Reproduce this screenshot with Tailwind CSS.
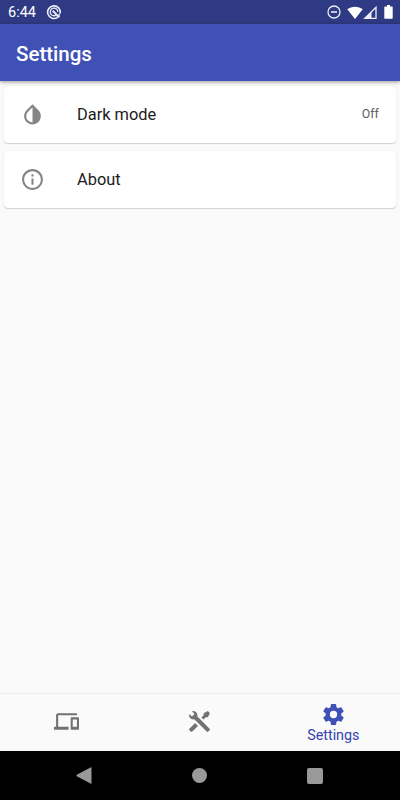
<!DOCTYPE html>
<html lang="en">
<head>
    <meta charset="UTF-8">
    <meta name="viewport" content="width=device-width, initial-scale=1.0">
    <title>Settings</title>
    <script src="https://cdn.jsdelivr.net/npm/@tailwindcss/browser@4"></script>
    <style>
        body {
            font-family: Roboto, sans-serif;
        }
    </style>
</head>
<body class="bg-[#fafafa] h-screen flex flex-col overflow-hidden">

    <!-- Status bar -->
    <div class="h-6 shrink-0 bg-[#2e3b84] text-white flex items-center pl-2 pr-[7px]">
        <span class="text-[14.5px] leading-6 pt-[2px] w-[38px]">6:44</span>
        <svg class="w-4 h-4" viewBox="0 0 16 16" fill="none" stroke="#eceef7">
            <path d="M11.6 13.3A6.3 6.3 0 1 1 14.1 9.5" stroke-width="1.6"/>
            <path d="M9.8 11.3A3.8 3.8 0 1 1 11.8 8" stroke-width="1.3"/>
            <path d="M6.6 6.6L13 13.2" stroke-width="2"/>
            <path d="M13.2 9.5v3.7" stroke-width="1.2"/>
        </svg>
        <div class="ml-auto flex items-center">
            <svg class="w-[14px] h-[14px] mr-[6px]" viewBox="0 0 14 14" fill="none" stroke="#eceef7" stroke-width="1.3">
                <circle cx="7" cy="7" r="6"/>
                <path d="M4 7h6" stroke-width="1.6"/>
            </svg>
            <svg class="w-4 h-[13px]" viewBox="0 0 16 13" fill="white">
                <path d="M8 13L0.3 3.2C4.5-.2 11.5-.2 15.7 3.2z"/>
            </svg>
            <svg class="w-[14px] h-[13px] mr-[7px]" viewBox="0 0 14 13">
                <path d="M13 1.3v11H1.8z" fill="none" stroke="#eceef7" stroke-width="1.3"/>
                <path d="M8.5 5.8V12.3H1.8z" fill="#eceef7"/>
            </svg>
            <svg class="w-[9px] h-[14px]" viewBox="0 0 9 14" fill="white">
                <path d="M3 0h3v1.4h2q.7 0 .7.7v10.8q0 .8-.7.8H1q-.7 0-.7-.8V2.1q0-.7.7-.7h2z"/>
            </svg>
        </div>
    </div>

    <!-- App bar -->
    <header class="h-[57px] shrink-0 bg-[#3f51b5] flex items-center px-4 shadow-[0_1px_4px_rgba(0,0,0,0.4)]">
        <h1 class="text-white text-[20.5px] font-medium pt-[3px]">Settings</h1>
    </header>

    <!-- Settings list -->
    <main class="flex-1 px-1 pt-[5px] flex flex-col gap-2">
        <div class="h-[57px] bg-white rounded-[4px] shadow-[0_1px_1px_rgba(0,0,0,0.16),0_0_1px_rgba(0,0,0,0.14)] flex items-center pl-4 pr-[17px]">
            <svg class="w-[25px] h-[25px] text-[#858585]" viewBox="0 0 24 24" fill="currentColor">
                <path d="M17.66 7.93L12 2.27 6.34 7.93c-3.12 3.12-3.12 8.19 0 11.31C7.9 20.8 9.95 21.58 12 21.58c2.05 0 4.1-.78 5.66-2.34 3.12-3.12 3.12-8.19 0-11.31zM12 19.59c-1.6 0-3.11-.62-4.24-1.76C6.62 16.69 6 15.19 6 13.59s.62-3.11 1.76-4.24L12 5.1v14.49z"/>
            </svg>
            <span class="ml-8 pt-[2px] text-[16.4px] text-[#1c1c1c]">Dark mode</span>
            <span class="ml-auto text-[12.3px] text-[#606060] tracking-[0.1px]">Off</span>
        </div>
        <div class="h-[57px] bg-white rounded-[4px] shadow-[0_1px_1px_rgba(0,0,0,0.16),0_0_1px_rgba(0,0,0,0.14)] flex items-center pl-4 pr-[17px]">
            <svg class="w-[25px] h-[25px] text-[#858585]" viewBox="0 0 24 24" fill="currentColor">
                <path d="M11 7h2v2h-2zm0 4h2v6h-2zm1-9C6.48 2 2 6.48 2 12s4.48 10 10 10 10-4.48 10-10S17.52 2 12 2zm0 18c-4.41 0-8-3.59-8-8s3.59-8 8-8 8 3.59 8 8-3.59 8-8 8z"/>
            </svg>
            <span class="ml-8 pt-[2px] text-[16.4px] text-[#1c1c1c]">About</span>
        </div>
    </main>

    <!-- Bottom navigation -->
    <nav class="h-[57px] shrink-0 grid grid-cols-3 shadow-[0_-1px_1px_rgba(0,0,0,0.05)]">
        <div class="flex items-center justify-center pb-[2px]">
            <svg class="w-[25px] h-[25px] text-[#727272]" viewBox="0 0 24 24" fill="currentColor">
                <path d="M4 6h18V4H4c-1.1 0-2 .9-2 2v11H0v3h14v-3H4V6zm19 2h-6c-.55 0-1 .45-1 1v10c0 .55.45 1 1 1h6c.55 0 1-.45 1-1V9c0-.55-.45-1-1-1zm-1 9h-4v-7h4v7z"/>
            </svg>
        </div>
        <div class="flex items-center justify-center pb-[2px]">
            <svg class="w-[25px] h-[25px] text-[#727272]" viewBox="0 0 24 24" fill="currentColor">
                <path d="M21.71 20.29L20.29 21.71A1 1 0 0 1 18.88 21.71L7 9.85A3.81 3.81 0 0 1 6 10A4 4 0 0 1 2.22 4.7L4.76 7.24L5.29 6.71L6.71 5.29L7.24 4.76L4.7 2.22A4 4 0 0 1 10 6A3.81 3.81 0 0 1 9.85 7L21.71 18.88A1 1 0 0 1 21.71 20.29M2.29 18.88A1 1 0 0 0 2.29 20.29L3.71 21.71A1 1 0 0 0 5.12 21.71L10.59 16.25L7.76 13.42M20 2L16 4V6L13.83 8.17L15.83 10.17L18 8H20L22 4Z"/>
            </svg>
        </div>
        <div class="flex flex-col items-center pt-2 text-[#3f51b5]">
            <svg class="w-[25px] h-[25px]" viewBox="0 0 24 24" fill="currentColor">
                <path d="M12 15.5A3.5 3.5 0 0 1 8.5 12 3.5 3.5 0 0 1 12 8.5a3.5 3.5 0 0 1 3.5 3.5 3.5 3.5 0 0 1-3.5 3.5m7.43-2.53c.04-.32.07-.64.07-.97s-.03-.66-.07-1l2.11-1.63c.19-.15.24-.42.12-.64l-2-3.46c-.12-.22-.39-.31-.61-.22l-2.49 1c-.52-.39-1.06-.73-1.69-.98l-.37-2.65A.506.506 0 0 0 14 2h-4c-.25 0-.46.18-.5.42l-.37 2.65c-.63.25-1.17.59-1.69.98l-2.49-1c-.22-.09-.49 0-.61.22l-2 3.46c-.13.22-.07.49.12.64L4.57 11c-.04.34-.07.67-.07 1s.03.65.07.97l-2.11 1.66c-.19.15-.25.42-.12.64l2 3.46c.12.22.39.3.61.22l2.49-1.01c.52.4 1.06.74 1.69.99l.37 2.65c.04.24.25.42.5.42h4c.25 0 .46-.18.5-.42l.37-2.65c.63-.26 1.17-.59 1.69-.99l2.49 1.01c.22.08.49 0 .61-.22l2-3.46c.12-.22.07-.49-.12-.64z"/>
            </svg>
            <span class="text-[14.3px] leading-4 text-[#3445b0]">Settings</span>
        </div>
    </nav>

    <!-- System navigation -->
    <div class="h-[49px] shrink-0 bg-black flex items-center justify-center gap-[100px] pr-px">
        <svg class="w-4 h-[17px]" viewBox="0 0 16 17" fill="#999">
            <path d="M15.5 .5v16Q15.3 17 14.5 16.6L.8 9.2Q0 8.5 .8 7.8L14.5 .4Q15.3 0 15.5 .5z"/>
        </svg>
        <div class="w-[15px] h-[15px] rounded-full bg-[#999]"></div>
        <div class="w-4 h-4 rounded-[2px] bg-[#999]"></div>
    </div>

</body>
</html>
